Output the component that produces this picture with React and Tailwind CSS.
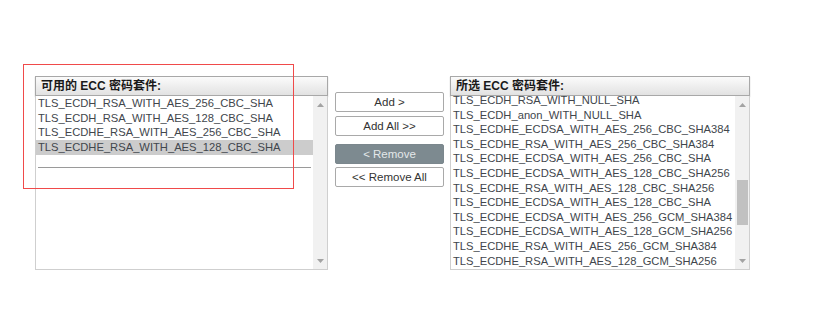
const available = [
  'TLS_ECDH_RSA_WITH_AES_256_CBC_SHA',
  'TLS_ECDH_RSA_WITH_AES_128_CBC_SHA',
  'TLS_ECDHE_RSA_WITH_AES_256_CBC_SHA',
  'TLS_ECDHE_RSA_WITH_AES_128_CBC_SHA',
]

const selected = [
  'TLS_ECDH_RSA_WITH_NULL_SHA',
  'TLS_ECDH_anon_WITH_NULL_SHA',
  'TLS_ECDHE_ECDSA_WITH_AES_256_CBC_SHA384',
  'TLS_ECDHE_RSA_WITH_AES_256_CBC_SHA384',
  'TLS_ECDHE_ECDSA_WITH_AES_256_CBC_SHA',
  'TLS_ECDHE_ECDSA_WITH_AES_128_CBC_SHA256',
  'TLS_ECDHE_RSA_WITH_AES_128_CBC_SHA256',
  'TLS_ECDHE_ECDSA_WITH_AES_128_CBC_SHA',
  'TLS_ECDHE_ECDSA_WITH_AES_256_GCM_SHA384',
  'TLS_ECDHE_ECDSA_WITH_AES_128_GCM_SHA256',
  'TLS_ECDHE_RSA_WITH_AES_256_GCM_SHA384',
  'TLS_ECDHE_RSA_WITH_AES_128_GCM_SHA256',
  'TLS_ECDHE_ECDSA_WITH_3DES_EDE_CBC_SHA',
]

function Arrow({ down }) {
  return (
    <svg width="7" height="4" viewBox="0 0 7 4" aria-hidden="true">
      <path d={down ? 'M0 0h7L3.5 4z' : 'M0 4h7L3.5 0z'} fill="#a3a3a3" />
    </svg>
  )
}

function Scrollbar({ thumb }) {
  return (
    <div className="flex w-[14px] shrink-0 flex-col items-center bg-[#f1f1f1] pb-[6px] pt-[7px]">
      <Arrow />
      {thumb ? (
        <div className="mt-[73px] h-[45px] w-[11px] bg-[#c1c1c1]" />
      ) : null}
      <div className="flex-1" />
      <Arrow down />
    </div>
  )
}

function Header({ children }) {
  return (
    <div className="h-[20px] border border-[#a8a8a8] bg-gradient-to-b from-[#fbfbfb] to-[#e2e2e2] pl-[5px] text-[12px] font-bold leading-[18px] text-[#1a1a1a] shadow-[0_1px_1px_rgba(0,0,0,0.25)]">
      {children}
    </div>
  )
}

function Panel({ title, width, children, thumb }) {
  return (
    <div className={width}>
      <Header>{title}</Header>
      <div className="flex h-[174px] border border-t-0 border-[#cfcfcf] bg-white">
        <div className="flex-1 overflow-hidden">{children}</div>
        <Scrollbar thumb={thumb} />
      </div>
    </div>
  )
}

function Button({ children, active, className }) {
  return (
    <button
      type="button"
      className={
        'h-[20px] w-[109px] rounded-[2px] border text-[11.5px] leading-[18px] ' +
        (active
          ? 'border-[#7b878d] bg-[#7d8a90] text-[#e3e8ea] '
          : 'border-[#a9a9a9] bg-white text-[#333] ') +
        className
      }
    >
      {children}
    </button>
  )
}

export default function App() {
  return (
    <div
      className="relative h-[312px] w-[833px] overflow-hidden bg-white"
      style={{ fontFamily: '"Liberation Sans", "Noto Sans CJK SC", sans-serif' }}
    >
      <div className="flex pl-[35px] pt-[76px]">
        <Panel title="可用的 ECC 密码套件:" width="w-[293px]">
          <div className="text-[11.2px] leading-[14.67px] text-[#41464c]">
            {available.map((item, i) => (
              <div
                key={item}
                className={'pl-[2px] ' + (i === 3 ? 'bg-[#cccccc]' : '')}
              >
                {item}
              </div>
            ))}
            <div className="mx-[2px] mt-[12px] h-px bg-[#9a9a9a]" />
          </div>
        </Panel>

        <div className="ml-[7px] mt-[16px] flex w-[109px] flex-col">
          <Button>Add &gt;</Button>
          <Button className="mt-[4px]">Add All &gt;&gt;</Button>
          <Button active className="mt-[8px]">
            &lt; Remove
          </Button>
          <Button className="mt-[3px]">&lt;&lt; Remove All</Button>
        </div>

        <Panel title="所选 ECC 密码套件:" width="ml-[6px] w-[300px]" thumb>
          <div className="-mt-[3px] text-[11.2px] leading-[14.6px] text-[#41464c]">
            {selected.map((item) => (
              <div key={item} className="pl-[2px]">
                {item}
              </div>
            ))}
          </div>
        </Panel>
      </div>

      <div className="pointer-events-none absolute left-[23px] top-[64px] h-[125px] w-[271px] border border-[#f04a4a]" />
    </div>
  )
}
